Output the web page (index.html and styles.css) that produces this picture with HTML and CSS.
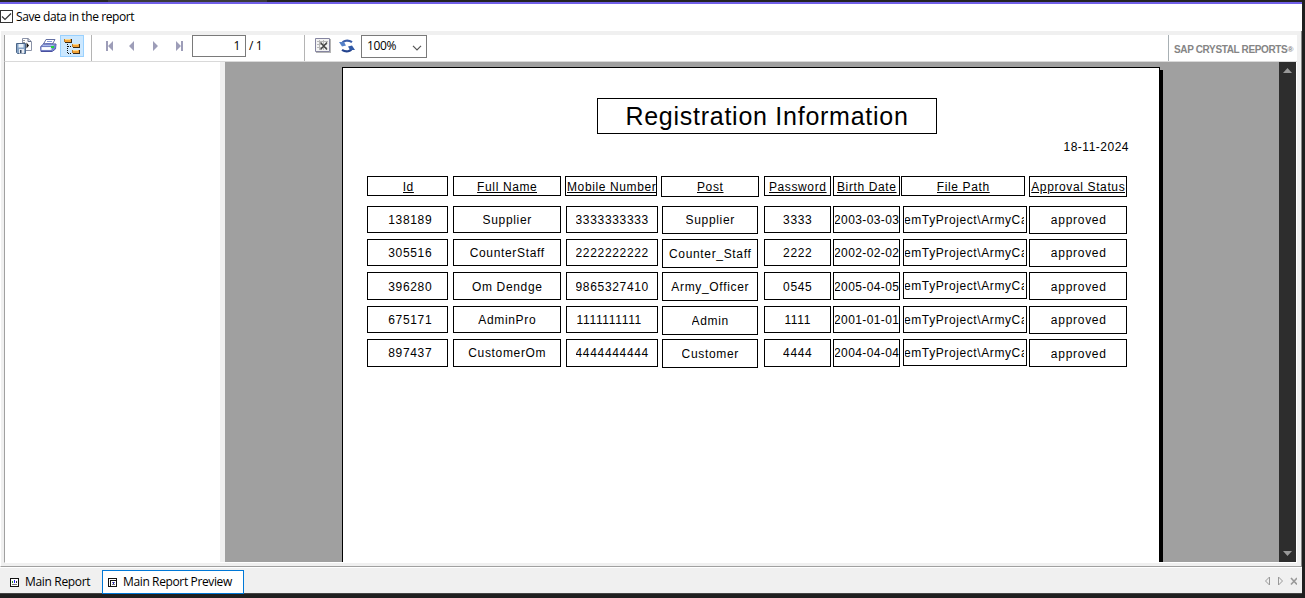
FILE: index.html
```html
<!DOCTYPE html>
<html lang="en">
<head>
<meta charset="utf-8">
<title>Main Report Preview</title>
<link rel="stylesheet" href="styles.css">
</head>
<body>
<div class="window">
  <div class="titlestrip"><i class="s1"></i><i class="s2"></i><i class="s3"></i></div>
  <div class="savebar">
    <svg class="check" width="13" height="13" viewBox="0 0 13 13"><rect x=".5" y=".5" width="12" height="12" fill="#fff" stroke="#333"/><path d="M2 6.500 5 9.500 11 3.500" fill="none" stroke="#333" stroke-width="1.2"/></svg>
    <span class="ui save-label">Save data in the report</span>
  </div>
  <div class="viewer">
    <div class="toolbar">
      <div class="group files">
        <svg class="ic-export" width="16" height="16" viewBox="0 0 16 16"><path d="M6.500 .5H12L15.500 3.500V12.500H6.500Z" fill="#fff" stroke="#8b93a8"/><path d="M12 .5V3.500H15" fill="none" stroke="#66708a"/><path d="M10.500 4.500 13 7.500 10.500 10.500Z" fill="#111"/><path d="M8 2V6" stroke="#333" stroke-dasharray="1 1"/><path d="M.5 5.500H9.500V15.500H1.500L.5 14.500Z" fill="#86a3c5" stroke="#4c6688"/><path d="M2.500 6H7.500V9.500H2.500Z" fill="#e9f2fa"/><path d="M3 11H8V15.500H3Z" fill="#e7ebf1"/><path d="M4 12H5.500V15H4Z" fill="#354761"/></svg>
        <svg class="ic-print" width="17" height="16" viewBox="0 0 17 16"><path d="M3.500 6 6 1.500H15L12.500 6Z" fill="#fff" stroke="#6470a4"/><path d="M7 3.500H12M6 5.500H11" stroke="#8596d5"/><path d="M.8 8.500 3.500 6H16L15.500 11 12 13.500H1Z" fill="#a9bbeb" stroke="#4950a0"/><path d="M1 8.500H12V12.500H1Z" fill="#e9f0fd" stroke="#5a67b5" stroke-width=".8"/><path d="M2 10.500H10" stroke="#fff" stroke-width="2"/><path d="M12 8.500 15.500 6.500V10.500L12 13Z" fill="#6f84cf"/><path d="M11 8H14V10H11Z" fill="#20d43b"/></svg>
        <span class="tree-btn"><svg width="16" height="17" viewBox="0 0 16 17" shape-rendering="crispEdges"><path d="M3.500 6V16M4 8.500H8M4 15.500H8" fill="none" stroke="#111" stroke-dasharray="1 1"/><path d="M1 1H7V5H1ZM9 6H15V10H9ZM9 12H15V16H9Z" fill="#f3a437"/><path d="M.5 1V4M8.500 6V9M8.500 12V15" stroke="#b77a2c"/><path d="M1 1.500H6M9 6.500H14M9 12.500H14" stroke="#ffd98c"/><path d="M1 4.500H7V1M9 9.500H15.500V6M9 15.500H15.500V12" fill="none" stroke="#3a2a18"/></svg></span>
      </div>
      <div class="group nav">
        <svg width="82" height="10" viewBox="0 0 82 10" fill="#9d9db8"><path d="M2 0H4V10H2ZM9 0V10L4 5ZM30 0V10L25 5ZM49 0V10L54 5ZM72 0V10L77 5ZM77 0H79V10H77Z"/></svg>
        <div class="pagebox ui">1</div><span class="ui of">/ 1</span>
      </div>
      <div class="group tools">
        <svg class="ic-close" width="16" height="15" viewBox="0 0 16 15"><path d="M1 1H16V15H1Z" fill="#b5b5b5"/><path d="M.5 .5H14.500V13.500H.5Z" fill="#f3f3f3" stroke="#8585a0"/><path d="M2 3.500H13M2 6.500H12M2 9.500H12M4.500 2V12M8.500 2V12" stroke="#b8b8b8"/><path d="M5.500 4.500 12 11.500M12 4.500 5.500 11.500" stroke="#444" stroke-width="1.500"/></svg>
        <svg class="ic-refresh" width="16" height="14" viewBox="0 0 16 14"><path d="M3 5C4 1.500 9 .5 13 3.200" fill="none" stroke="#3a5da8" stroke-width="2.200"/><path d="M0 3H5L7 6.500 3 7.500Z" fill="#5481c8"/><path d="M13 9C12 12.500 7 13.500 3 10.800" fill="none" stroke="#25458f" stroke-width="2.200"/><path d="M9 7.500 13 6.500 16 11H11Z" fill="#315aa7"/></svg>
        <div class="zoombox ui"><span>100%</span><svg width="10" height="6" viewBox="0 0 10 6"><path d="M1 .8 5 4.800 9 .8" fill="none" stroke="#555" stroke-width="1.200"/></svg></div>
      </div>
      <div class="brand"><span>SAP CRYSTAL REPORTS<b>®</b></span></div>
    </div>
    <div class="workspace">
      <div class="treepane"></div>
      <div class="canvas">
        <div class="page">
          <h1 class="title"><span>Registration Information</span></h1>
          <div class="date">18-11-2024</div>
          <div class="row head">
            <div class="c id"><span>Id</span></div><div class="c name"><span>Full Name</span></div><div class="c mobile"><span>Mobile Number</span></div><div class="c post"><span>Post</span></div><div class="c pass"><span>Password</span></div><div class="c birth"><span>Birth Date</span></div><div class="c path"><span>File Path</span></div><div class="c status"><span>Approval Status</span></div>
          </div>
          <div class="row r1">
            <div class="c id"><span>138189</span></div><div class="c name"><span>Supplier</span></div><div class="c mobile"><span>3333333333</span></div><div class="c post"><span>Supplier</span></div><div class="c pass"><span>3333</span></div><div class="c birth"><span>2003-03-03</span></div><div class="c path"><span>emTyProject\ArmyCa</span></div><div class="c status"><span>approved</span></div>
          </div>
          <div class="row r2">
            <div class="c id"><span>305516</span></div><div class="c name"><span>CounterStaff</span></div><div class="c mobile"><span>2222222222</span></div><div class="c post"><span>Counter_Staff</span></div><div class="c pass"><span>2222</span></div><div class="c birth"><span>2002-02-02</span></div><div class="c path"><span>emTyProject\ArmyCa</span></div><div class="c status"><span>approved</span></div>
          </div>
          <div class="row r3">
            <div class="c id"><span>396280</span></div><div class="c name"><span>Om Dendge</span></div><div class="c mobile"><span>9865327410</span></div><div class="c post"><span>Army_Officer</span></div><div class="c pass"><span>0545</span></div><div class="c birth"><span>2005-04-05</span></div><div class="c path"><span>emTyProject\ArmyCa</span></div><div class="c status"><span>approved</span></div>
          </div>
          <div class="row r4">
            <div class="c id"><span>675171</span></div><div class="c name"><span>AdminPro</span></div><div class="c mobile ones"><span>1111111111</span></div><div class="c post"><span>Admin</span></div><div class="c pass"><span>1111</span></div><div class="c birth"><span>2001-01-01</span></div><div class="c path"><span>emTyProject\ArmyCa</span></div><div class="c status"><span>approved</span></div>
          </div>
          <div class="row r5">
            <div class="c id"><span>897437</span></div><div class="c name"><span>CustomerOm</span></div><div class="c mobile"><span>4444444444</span></div><div class="c post"><span>Customer</span></div><div class="c pass"><span>4444</span></div><div class="c birth"><span>2004-04-04</span></div><div class="c path"><span>emTyProject\ArmyCa</span></div><div class="c status"><span>approved</span></div>
          </div>
        </div>
        <div class="shadow"></div>
        <div class="scroll"><svg width="9" height="5" viewBox="0 0 9 5"><path d="M0 5 4.500 0 9 5Z" fill="#999"/></svg><svg width="9" height="5" viewBox="0 0 9 5"><path d="M0 0 4.500 5 9 0Z" fill="#999"/></svg></div>
      </div>
    </div>
  </div>
  <div class="tabs">
    <div class="tab ui"><svg width="9" height="9" viewBox="0 0 9 9" shape-rendering="crispEdges"><path d="M.5 .5H8.500V8.500H.5Z" fill="#fff" stroke="#111"/><path d="M2.500 3V5" stroke="#228b22"/><path d="M4.500 2V5" stroke="#22f"/><path d="M6.500 3V5" stroke="#333"/><path d="M2 6.500H7" stroke="#777"/></svg><span>Main Report</span></div>
    <div class="tab active ui"><svg width="9" height="9" viewBox="0 0 9 9" shape-rendering="crispEdges"><path d="M.5 .5H8.500V8.500H.5Z" fill="#fff" stroke="#111"/><path d="M2.500 8V2.500H8" fill="none" stroke="#111"/><path d="M4 4.500H7M4 6.500H7" stroke="#777"/><path d="M5.500 4V6" stroke="#22c"/></svg><span>Main Report Preview</span></div>
    <svg class="tabnav" width="33" height="10" viewBox="0 0 33 10" fill="none" stroke="#999"><path d="M5.500 1V9L1.500 5ZM14.500 1V9L18.500 5Z"/><path d="M27 2 33 8.500M33 2 27 8.500" stroke-width="1.600"/></svg>
  </div>
</div>
</body>
</html>
```
FILE: styles.css
```css
* { box-sizing: border-box; }
body { margin: 0; width: 1305px; height: 598px; overflow: hidden; background: #1f1f1f; font-family: "Liberation Sans", Arial, sans-serif; color: #000; }
svg { display: block; flex: none; }
.window { display: flex; flex-direction: column; }
.ui { font-family: "Open Sans", "Noto Sans", sans-serif; font-size: 12px; line-height: 16px; letter-spacing: -.33px; white-space: nowrap; }
.save-label { letter-spacing: -.41px; }
.titlestrip { height: 4px; border-bottom: 2px solid #7160e8; display: flex; background: #222; width: 1302px; }
.s1 { width: 108px; background: #252526; }
.s2 { width: 159px; background: #3a3a3c; }
.s3 { width: 849px; }
.savebar { width: 1302px; height: 27px; background: #fff; display: flex; align-items: center; gap: 3px; padding-bottom: 2px; }
.viewer { width: 1302px; height: 536px; background: #f0f0f0; border-left: 1px solid #fff; border-right: 1px solid #888; border-bottom: 1px solid #a0a0a0; padding: 4px 4px 0 3px; }
.toolbar { height: 27px; background: #fff; border-left: 1px solid #a0a0a0; border-bottom: 1px solid #d9d9d9; display: flex; }
.group { display: flex; height: 26px; border-right: 1px solid #b4b4b4; }
.files { width: 87px; padding-left: 11px; }
.ic-export { margin-top: 3px; }
.ic-print { margin: 3px 0 0 8px; }
.tree-btn { width: 24px; height: 22px; margin-left: 3px; background: #cce8ff; border: 1px solid #99d1ff; padding: 2px 3px; }
.nav { width: 213px; padding-left: 12px; }
.nav > svg { margin-top: 6px; }
.pagebox { width: 54px; height: 22px; margin-left: 6px; border: 1px solid #7a7a7a; text-align: right; padding: 2px 5px; }
.of { margin: 3px 0 0 3px; }
.tools { flex: 1; padding-left: 10px; border-right: 1px solid #a8b0b4; }
.ic-close { margin-top: 3px; }
.ic-refresh { margin: 4px 0 0 8px; }
.zoombox { margin-left: 6px; width: 66px; height: 23px; border: 1px solid #7a7a7a; display: flex; justify-content: space-between; align-items: center; padding: 0 4px 2px 5px; }
.zoombox svg { margin-top: 4px; }
.brand { width: 128px; padding: 8px 0 0 5px; font-size: 10px; line-height: 13px; font-weight: bold; color: #858585; white-space: nowrap; letter-spacing: -.36px; }
.brand b { font-size: 8px; vertical-align: 1px; }
.workspace { height: 501px; display: flex; border-left: 1px solid #a0a0a0; border-bottom: 1px solid #fff; }
.treepane { width: 215px; background: #fff; }
.canvas { width: 1072px; margin-left: 5px; height: 500px; background: #a0a0a0; display: flex; border-right: 1px solid #fff; }
.page { width: 818px; height: 495px; margin: 5px 0 0 117px; background: #fff; border: 1px solid #000; border-bottom: 0; padding: 30px 0 0 24px; }
.shadow { width: 3px; margin-top: 8px; background: #000; }
.scroll { width: 17px; margin-left: auto; background: #2d2d2d; display: flex; flex-direction: column; align-items: center; justify-content: space-between; padding: 6px 0; }
.title { width: 340px; height: 36px; margin: 0 0 0 230px; border: 1px solid #000; font-size: 25px; line-height: 35px; font-weight: normal; text-align: center; letter-spacing: .74px; white-space: nowrap; }
.date { width: 762px; margin-top: 5px; height: 16px; line-height: 16px; font-size: 12px; text-align: right; letter-spacing: .5px; }
.row { display: flex; align-items: flex-start; height: 33px; font-size: 12px; line-height: 16px; letter-spacing: .67px; }
.row.head { height: 30px; margin-top: 21px; text-decoration: underline; }
.r3 { height: 34px; }
.c { height: 27px; border: 1px solid #000; padding: 0 1px; display: flex; align-items: center; justify-content: center; flex: none; overflow: hidden; white-space: nowrap; }
.c span { min-width: 0; overflow: hidden; margin-right: -.5px; }
.id { width: 81px; padding-left: 6px; }
.name { width: 108px; margin-left: 5px; }
.mobile { width: 92px; margin-left: 5px; }
.ones { padding-right: 7px; }
.post { width: 96px; height: 29px; margin-left: 4px; }
.pass { width: 67px; margin-left: 6px; }
.birth { width: 67px; margin-left: 2px; }
.path { width: 124px; margin-left: 3px; }
.row:not(.head) .birth span { text-indent: -1px; letter-spacing: .4px; }
.row:not(.head) .path { padding-right: 2px; }
.row:not(.head) .path span { text-indent: -1px; letter-spacing: .6px; margin-right: 0; }
.status { width: 98px; height: 28px; padding-left: 2px; margin-left: 2px; letter-spacing: .72px; }
.r1 .post { height: 28px; }
.r3 .id, .r3 .name, .r3 .mobile, .r3 .pass, .r3 .birth, .r5 .id, .r5 .name, .r5 .mobile, .r5 .pass, .r5 .birth { height: 28px; }
.r3 .id, .r3 .name, .r3 .mobile, .r3 .pass, .r3 .birth, .r3 .status, .r3 .post, .r5 .status { padding-top: 1px; }
.head .c { height: 20px; letter-spacing: .62px; padding-top: 1px; }
.head .id { padding-left: 2px; }
.head .mobile { margin-left: 4px; justify-content: flex-start; }
.head .post { width: 98px; height: 21px; padding-top: 0; }
.head .pass { margin-left: 5px; }
.head .path { margin-left: 1px; }
.head .status { margin-left: 4px; height: 21px; padding: 0; }
.tabs { width: 1302px; height: 27px; background: #f0f0f0; border-top: 1px solid #fff; border-bottom: 1px solid #444; display: flex; align-items: flex-start; }
.tab { width: 90px; height: 24px; margin-top: 2px; display: flex; align-items: center; gap: 6px; padding-left: 10px; }
.tab.active { width: 142px; margin-left: 12px; border: 1px solid #0078d7; background: #fff; padding-left: 5px; letter-spacing: -.37px; }
.tabnav { margin: 8px 5px 0 auto; }
```
